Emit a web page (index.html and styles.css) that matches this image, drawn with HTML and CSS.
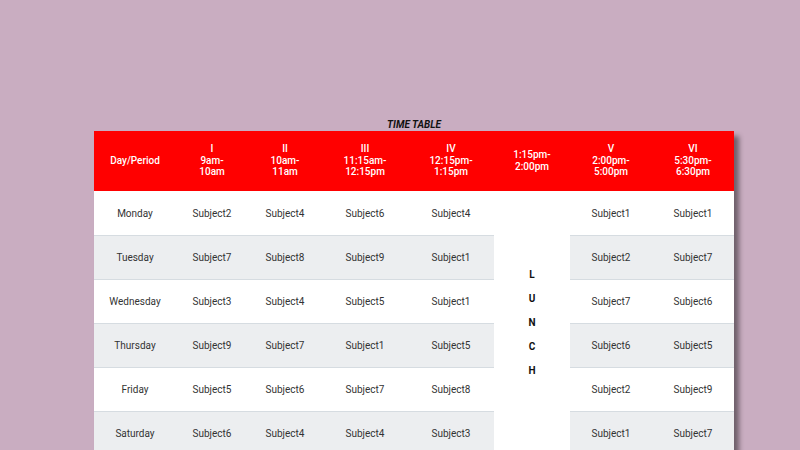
FILE: index.html
```html
<!DOCTYPE html>
<html>
<head>
<meta charset="utf-8">
<link rel="stylesheet" href="styles.css">
</head>
<body>
<div class="page">
  <div class="wrap">
    <div class="title">TIME TABLE</div>
    <table class="tt">
      <colgroup>
        <col class="c-day"><col class="c-1"><col class="c-2"><col class="c-3"><col class="c-4"><col class="c-l"><col class="c-5"><col class="c-6">
      </colgroup>
      <thead>
        <tr>
          <th>Day/Period</th>
          <th>I<br>9am-<br>10am</th>
          <th>II<br>10am-<br>11am</th>
          <th>III<br>11:15am-<br>12:15pm</th>
          <th>IV<br>12:15pm-<br>1:15pm</th>
          <th>1:15pm-<br>2:00pm</th>
          <th>V<br>2:00pm-<br>5:00pm</th>
          <th>VI<br>5:30pm-<br>6:30pm</th>
        </tr>
      </thead>
      <tbody>
        <tr>
          <td>Monday</td><td>Subject2</td><td>Subject4</td><td>Subject6</td><td>Subject4</td>
          <td class="lunch" rowspan="6"><div>L</div><div>U</div><div>N</div><div>C</div><div>H</div></td>
          <td>Subject1</td><td>Subject1</td>
        </tr>
        <tr class="alt">
          <td>Tuesday</td><td>Subject7</td><td>Subject8</td><td>Subject9</td><td>Subject1</td><td>Subject2</td><td>Subject7</td>
        </tr>
        <tr>
          <td>Wednesday</td><td>Subject3</td><td>Subject4</td><td>Subject5</td><td>Subject1</td><td>Subject7</td><td>Subject6</td>
        </tr>
        <tr class="alt">
          <td>Thursday</td><td>Subject9</td><td>Subject7</td><td>Subject1</td><td>Subject5</td><td>Subject6</td><td>Subject5</td>
        </tr>
        <tr>
          <td>Friday</td><td>Subject5</td><td>Subject6</td><td>Subject7</td><td>Subject8</td><td>Subject2</td><td>Subject9</td>
        </tr>
        <tr class="alt">
          <td>Saturday</td><td>Subject6</td><td>Subject4</td><td>Subject4</td><td>Subject3</td><td>Subject1</td><td>Subject7</td>
        </tr>
      </tbody>
    </table>
  </div>
</div>
</body>
</html>
```

FILE: styles.css
```css
html, body {
  margin: 0;
  padding: 0;
  background: #c9adc1;
  font-family: Roboto, "Liberation Sans", Arial, sans-serif;
}
.page {
  width: 800px;
  height: 450px;
  overflow: hidden;
  padding: 118px 0 0 94px;
  box-sizing: border-box;
}
.wrap {
  width: 640px;
}
.title {
  text-align: center;
  font-size: 10px;
  font-weight: 700;
  font-style: italic;
  color: #111;
  line-height: 13px;
}
.tt {
  width: 640px;
  table-layout: fixed;
  border-collapse: separate;
  border-spacing: 0;
  box-shadow: 5px 5px 5px rgba(0, 0, 0, 0.45);
  background: #fff;
}
.c-day { width: 82px; }
.c-1 { width: 72px; }
.c-2 { width: 74px; }
.c-3 { width: 86px; }
.c-4 { width: 86px; }
.c-l { width: 76px; }
.c-5 { width: 82px; }
.c-6 { width: 82px; }
.tt th {
  background: #ff0000;
  color: #fff;
  font-size: 10px;
  font-weight: 500;
  line-height: 11.5px;
  padding: 12px 0 13px;
  height: 35px;
  text-align: center;
  vertical-align: middle;
}
.tt td {
  font-size: 10px;
  color: #333;
  text-align: center;
  vertical-align: middle;
  height: 43px;
  padding: 0;
  border-top: 1px solid #d6dce1;
}
.tt tbody tr:first-child td {
  border-top: none;
  height: 44px;
}
.tt tr.alt td {
  background: #eceef0;
}
.tt td.lunch {
  background: #fff;
  border-top: none;
  color: #111;
  font-weight: 700;
  vertical-align: middle;
}
.lunch div {
  line-height: 24px;
}
```
